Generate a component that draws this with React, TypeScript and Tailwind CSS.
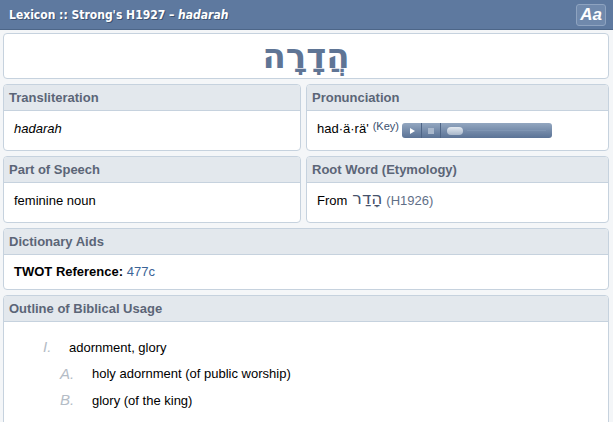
import React from "react";

function Box({ title, children, className = "" }: { title: string; children: React.ReactNode; className?: string }) {
  return (
    <div className={"rounded-[4px] border border-[#c6d2de] bg-white overflow-hidden " + className}>
      <div className="h-[26px] bg-[#e3e8ed] border-b border-[#c6d2de] px-[5px] flex items-center text-[13px] font-bold text-[#5b6577]">
        {title}
      </div>
      {children}
    </div>
  );
}

export default function App() {
  return (
    <div className="w-[613px] h-[422px] overflow-hidden bg-[#f4f6f8]" style={{ fontFamily: '"Liberation Sans", Arial, sans-serif' }}>
      <div className="h-[30px] bg-[#5e799f] border-b border-[#4d6688] flex items-center justify-between pl-[9px] pr-[7px]">
        <div className="text-white text-[12px] font-bold [text-shadow:1px_1px_0_#3d5270]" style={{ fontFamily: '"DejaVu Sans Condensed", "DejaVu Sans", sans-serif' }}>
          Lexicon :: Strong's H1927 – <span className="italic">hadarah</span>
        </div>
        <div className="w-[30px] h-[22px] rounded-[3px] border border-[#8ea3c0] bg-[#7089ac] flex items-center justify-center text-white text-[17px] font-bold italic leading-none" style={{ fontFamily: '"Liberation Sans", Arial, sans-serif' }}>
          Aa
        </div>
      </div>
      <div className="pl-[3px] pt-[3px] pr-[4px] flex flex-col gap-[5px]">
        <div className="h-[46px] rounded-[4px] border border-[#c6d2de] bg-white flex items-center justify-center">
          <span dir="rtl" className="text-[34px] leading-none text-[#5f7595] font-bold" style={{ fontFamily: '"DejaVu Sans", "Noto Sans", sans-serif' }}>הֲדָרָה</span>
        </div>
        <div className="grid grid-cols-[298px_1fr] gap-[5px]">
          <Box title="Transliteration" className="h-[67px]">
            <div className="px-[10px] pt-[8px] text-[13px] italic text-black">hadarah</div>
          </Box>
          <Box title="Pronunciation" className="h-[67px]">
            <div className="px-[10px] pt-[8px] flex items-start text-[13px] text-black">
              <span>had·ä·rä'</span>
              <span className="text-[11px] text-[#3b4f6e] ml-[4px] -mt-[1px]">(Key)</span>
              <div className="ml-[3px] mt-[4px] w-[150px] h-[15px] rounded-[3px] bg-gradient-to-b from-[#93a7c0] to-[#5b7396] flex items-center">
                <div className="w-[20px] h-full flex items-center justify-center border-r border-[#4e6586]">
                  <div className="w-0 h-0 border-y-[3px] border-y-transparent border-l-[5px] border-l-white ml-[2px]" />
                </div>
                <div className="w-[19px] h-full flex items-center justify-center border-r border-[#4e6586]">
                  <div className="w-[6px] h-[6px] bg-[#a9b8cc]" />
                </div>
                <div className="flex-1 h-full relative flex items-center px-[6px]">
                  <div className="absolute left-[26px] right-[6px] top-[7px] h-px bg-[#7f95b3]" />
                  <div className="w-[16px] h-[8px] rounded-[4px] bg-gradient-to-b from-[#e3e9f0] to-[#a8b7ca] relative" />
                </div>
              </div>
            </div>
          </Box>
          <Box title="Part of Speech" className="h-[67px]">
            <div className="px-[10px] pt-[8px] text-[13px] text-black">feminine noun</div>
          </Box>
          <Box title="Root Word (Etymology)" className="h-[67px]">
            <div className="px-[10px] pt-[8px] text-[13px] text-black flex items-start">
              <span>From</span>
              <span dir="rtl" className="ml-[5px] text-[17px] leading-[15px] text-[#45516a]" style={{ fontFamily: '"DejaVu Sans", sans-serif' }}>הָדַר</span>
              <span className="ml-[4px] text-[#5f6f87]">(H1926)</span>
            </div>
          </Box>
        </div>
        <Box title="Dictionary Aids" className="h-[62px]">
          <div className="px-[10px] pt-[7px] text-[13px] text-black">
            <span className="font-bold">TWOT Reference:</span> <span className="text-[#3b6496]">477c</span>
          </div>
        </Box>
        <Box title="Outline of Biblical Usage" className="h-[140px]">
          <div className="pt-[14px] text-[13px] text-black flex flex-col gap-[4px]">
            <div className="flex items-center pl-[39px]">
              <span className="w-[26px] text-[15px] italic text-[#b4bcc6]">I.</span>
              <span>adornment, glory</span>
            </div>
            <div className="flex items-center pl-[56px]">
              <span className="w-[32px] text-[15px] italic text-[#b4bcc6]">A.</span>
              <span>holy adornment (of public worship)</span>
            </div>
            <div className="flex items-center pl-[56px]">
              <span className="w-[32px] text-[15px] italic text-[#b4bcc6]">B.</span>
              <span>glory (of the king)</span>
            </div>
          </div>
        </Box>
      </div>
    </div>
  );
}
